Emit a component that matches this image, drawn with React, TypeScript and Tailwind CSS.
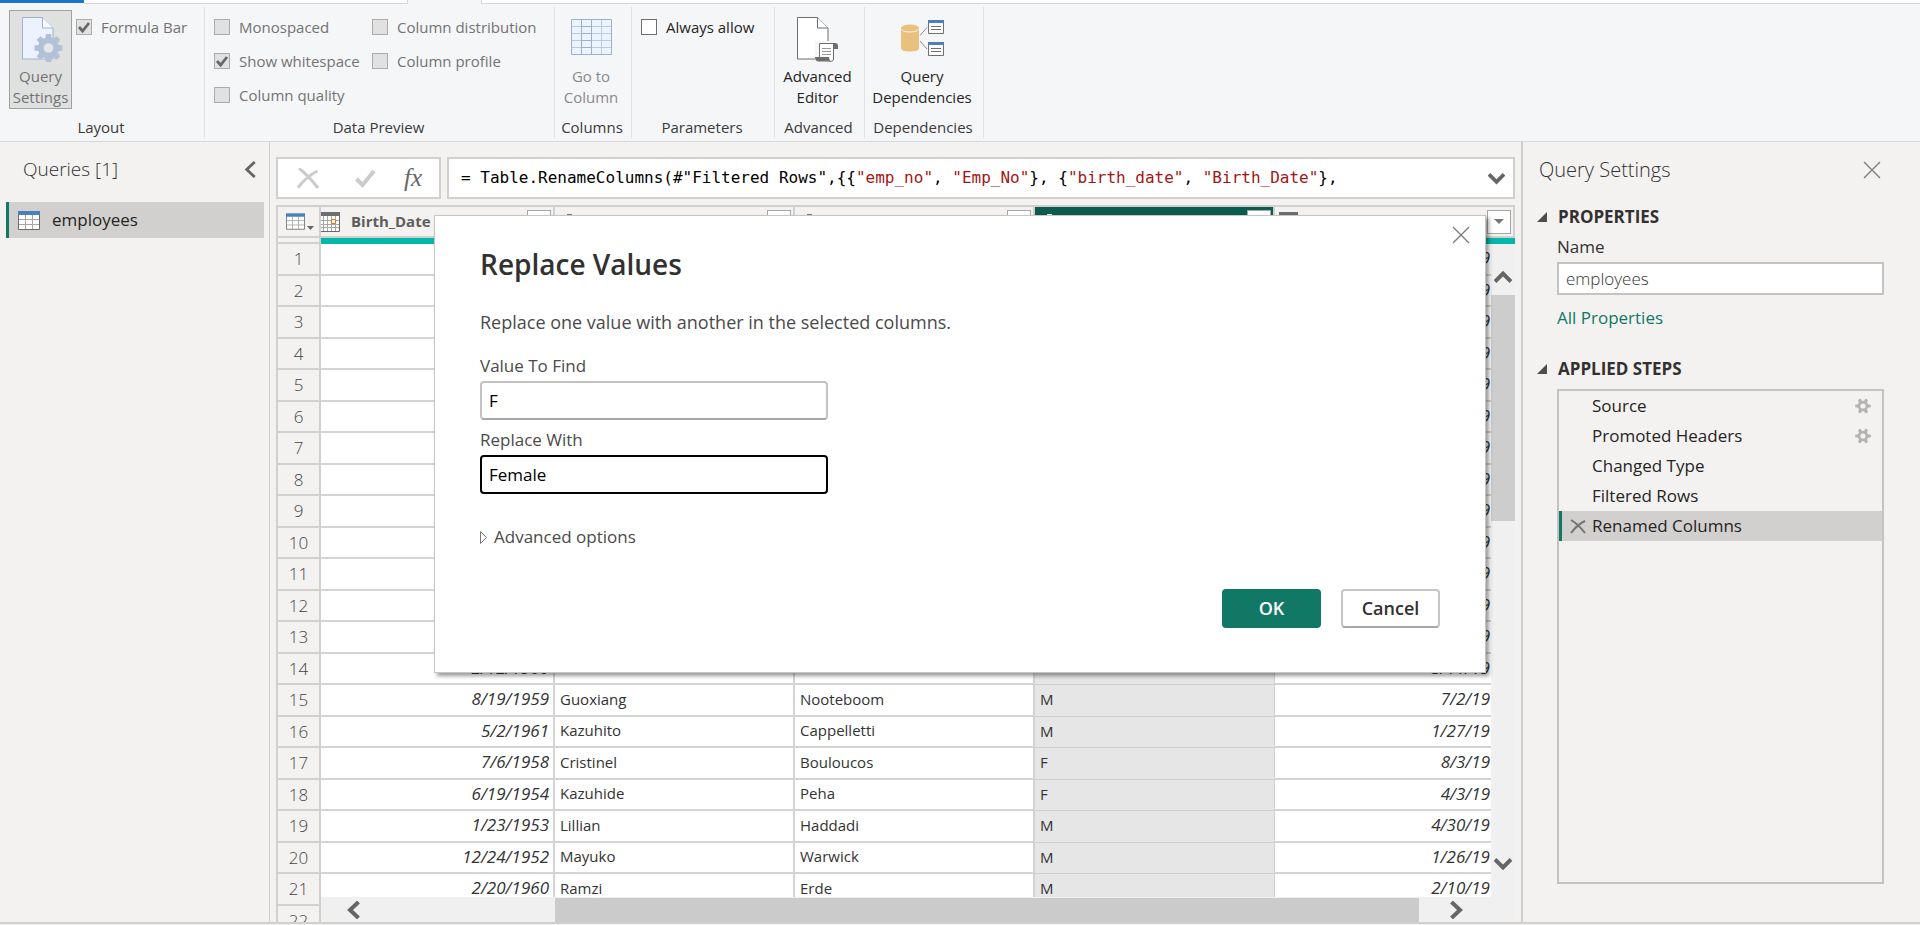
import type { ReactNode } from "react";

type CheckProps = { label: string; checked?: boolean; disabled?: boolean };

function Check({ label, checked = false, disabled = true }: CheckProps) {
  return (
    <label
      className={
        disabled
          ? "flex h-[34px] items-center gap-[9px] whitespace-nowrap text-[#737373]"
          : "flex h-[34px] items-center gap-[9px] whitespace-nowrap text-[#252423]"
      }
    >
      <span className="relative flex">
        <input
          type="checkbox"
          defaultChecked={checked}
          disabled={disabled}
          className={
            disabled
              ? "size-4 appearance-none border border-[#ababab] bg-[#e1e1e1]"
              : "size-4 appearance-none border border-[#6e6e6e] bg-white"
          }
        />
        {checked && (
          <svg viewBox="0 0 16 16" className="pointer-events-none absolute inset-0 size-4" aria-hidden="true">
            <path d="M3 8l3.6 4L13 4" fill="none" stroke="#686868" strokeWidth="2.8" />
          </svg>
        )}
      </span>
      {label}
    </label>
  );
}

function Group({ title, className, children }: { title: string; className: string; children: ReactNode }) {
  return (
    <section className={"flex h-[131px] shrink-0 flex-col justify-between border-r border-[#e1e2e3] pt-[3px] pb-px " + className}>
      <div className="flex">{children}</div>
      <h2 className="pr-0.5 text-center leading-5 text-[#3b3a39]">{title}</h2>
    </section>
  );
}

function BigButton({ lines, icon, className }: { lines: [string, string]; icon: ReactNode; className: string }) {
  return (
    <button type="button" className={"flex h-[99px] flex-col items-center border pt-1.5 " + className}>
      {icon}
      <span className="mt-1 block leading-[21px]">
        {lines[0]}
        <br />
        {lines[1]}
      </span>
    </button>
  );
}

const TEETH = [0, 45, 90, 135, 180, 225, 270, 315];

function SettingsIcon() {
  return (
    <svg width="41" height="45" viewBox="0 0 41 45" aria-hidden="true" className="ml-1">
      <path d="M.5.5h20L31 11v31H.5z" fill="#eaf3fe" stroke="#a3b1cf" />
      <path d="M20.5.5V11H31" fill="#f7fafe" stroke="#a3b1cf" />
      <g transform="translate(26.500 31)" fill="#b2c0d8">
        <circle r="10.500" />
        {TEETH.map((a) => (
          <path key={a} d="M-3.500-8l1-6h5l1 6z" transform={`rotate(${a})`} />
        ))}
        <circle r="4.800" fill="#e4e7e8" />
      </g>
    </svg>
  );
}

function ColumnsIcon() {
  return (
    <svg width="41" height="45" viewBox="0 0 41 45" aria-hidden="true">
      <path d="M.5 2.500h40v35H.5z" fill="#eaf3fe" />
      <path d="M.5 9.500h40M.5 16.500h40M.5 23.500h40M.5 30.500h40M30.500 2.500v35" stroke="#bcc8de" />
      <path d="M.5 2.500h40v35H.5zM10.500 2.500h10v35h-10zM10.500 9.500h10M10.500 16.500h10M10.500 23.500h10M10.500 30.500h10" fill="none" stroke="#a0aecb" />
    </svg>
  );
}

function EditorIcon() {
  return (
    <svg width="41" height="45" viewBox="0 0 41 45" aria-hidden="true">
      <path d="M.5.5h20L31 11v31H.5z" fill="#fff" stroke="#6e6e6e" />
      <path d="M20.500.5V11H31" fill="#fff" stroke="#6e6e6e" />
      <path d="M18 24h23v21H18z" fill="#f5f6f8" />
      <path d="M23 27h13v17H23z" fill="#fff" />
      <path d="M22.500 41V26.500H37M36.500 27v16q-1 1.500-4 1.500" fill="none" stroke="#6e6e6e" />
      <path d="M35 26h3q3 0 3 3v3h-4v-3zM18 40h14l1 4.500H21q-3-.5-3-4.500z" fill="#6e6e6e" />
      <path d="M25 31.500h9M25 34.500h9M25 37.500h9" stroke="#9a9a9a" />
    </svg>
  );
}

function DependenciesIcon() {
  return (
    <svg width="43" height="45" viewBox="0 0 43 45" aria-hidden="true">
      <path d="M0 10v21q0 3.500 9 3.500t9-3.500V10z" fill="#e8c17f" />
      <ellipse cx="9" cy="12" rx="9" ry="3.500" fill="#f5f0e5" />
      <ellipse cx="9" cy="11" rx="9" ry="3.500" fill="#e8c17f" />
      <path d="M19 18.500l7-8M19 24l7 8" stroke="#8a8a8a" />
      {[3, 25].map((y) => (
        <g key={y} transform={`translate(27 ${y})`}>
          <path d="M.5.5h15v13H.5z" fill="#fff" stroke="#6e6e6e" />
          <path d="M0 0h16v3H0z" fill="#4a80bd" />
          <path d="M3 6.500h10M3 9.500h10" stroke="#6e6e6e" />
        </g>
      ))}
    </svg>
  );
}

function TableIcon({ className }: { className: string }) {
  return (
    <svg viewBox="0 0 22 19" className={className} aria-hidden="true">
      <path d="M.5.5h21v18H.5z" fill="#fff" />
      <path d="M1 8.500h20M1 13.500h20M7.500 4v14M14.500 4v14" stroke="#a6a6a6" />
      <path d="M.5 1v17.500h21V1" fill="none" stroke="#6a6a6a" />
      <path d="M0 0h22v4H0z" fill="#4a80bd" />
    </svg>
  );
}

function CalendarIcon() {
  return (
    <svg width="19" height="20" viewBox="0 0 19 20" aria-hidden="true" className="shrink-0">
      <path d="M0 .5h18.500v19H0z" fill="#fff" />
      <path d="M0 8.500h18M0 12.500h18M0 15.500h18M2.500 4v15M6.500 4v15M10.500 4v15M14.500 4v15" stroke="#a6a6a6" />
      <path d="M18.500 1v18.500H0" fill="none" stroke="#6a6a6a" />
      <path d="M0 0h19v4H0z" fill="#6e6e6e" />
      <path d="M10.500 7.500h4v4h-4z" fill="#fff" stroke="#e07a1f" />
    </svg>
  );
}

function Chevron({ d, className, w = 3 }: { d: string; className: string; w?: number }) {
  return (
    <svg viewBox="0 0 18 18" className={className} aria-hidden="true">
      <path d={d} fill="none" stroke="#666" strokeWidth={w} />
    </svg>
  );
}

const UP = "M1 13.500L9 5.500L17 13.500";
const DOWN = "M1 4.500L9 12.500L17 4.500";
const LEFT = "M13.500 1L5 9L13.500 17";
const RIGHT = "M4.500 1L13 9L4.500 17";

function CloseIcon() {
  return (
    <svg width="18" height="18" viewBox="0 0 18 18" aria-hidden="true">
      <path d="M1 1l16 16M17 1L1 17" stroke="#7a7a7a" strokeWidth="1.300" />
    </svg>
  );
}

function Gear() {
  return (
    <svg width="16" height="16" viewBox="-8 -8 16 16" aria-hidden="true">
      <g fill="#b3b3b3">
        {[0, 60, 120, 180, 240, 300].map((a) => (
          <path key={a} d="M-1.800-4.500h3.600l-.5-3.300h-2.600z" transform={`rotate(${a + 30})`} />
        ))}
        <circle r="5.300" />
      </g>
      <circle r="2.600" fill="#f3f2f1" />
    </svg>
  );
}

function FilterButton({ label }: { label: string }) {
  return (
    <button
      type="button"
      aria-label={label}
      className="ml-auto flex size-6 shrink-0 items-center justify-center border border-[#a6a6a6] bg-white"
    >
      <svg width="10" height="5" viewBox="0 0 10 5" aria-hidden="true">
        <path d="M0 0h10L5 5z" fill="#777" />
      </svg>
    </button>
  );
}

type Row = [string, string, string, string, string];

const EMPTY: Row = ["", "", "", "", "9"];

const ROWS: Row[] = [
  ...Array.from({ length: 13 }, () => EMPTY),
  ["2/12/1960", "", "", "", "3/11/19"],
  ["8/19/1959", "Guoxiang", "Nooteboom", "M", "7/2/19"],
  ["5/2/1961", "Kazuhito", "Cappelletti", "M", "1/27/19"],
  ["7/6/1958", "Cristinel", "Bouloucos", "F", "8/3/19"],
  ["6/19/1954", "Kazuhide", "Peha", "F", "4/3/19"],
  ["1/23/1953", "Lillian", "Haddadi", "M", "4/30/19"],
  ["12/24/1952", "Mayuko", "Warwick", "M", "1/26/19"],
  ["2/20/1960", "Ramzi", "Erde", "M", "2/10/19"],
  ["", "", "", "", ""],
];

const STEPS = [
  { name: "Source", gear: true },
  { name: "Promoted Headers", gear: true },
  { name: "Changed Type", gear: false },
  { name: "Filtered Rows", gear: false },
];

function Ribbon() {
  return (
    <header className="shrink-0 border-b border-[#d6d8da] bg-[#f5f6f8] text-[15px]">
      <div className="flex h-1">
        <div className="h-[3px] w-[84px] bg-[#1a76cc]" />
        <div className="w-[324px] border-r border-b border-[#d8d8d8] bg-white" />
        <div className="w-[73px]" />
        <div className="flex-1 border-b border-l border-[#d8d8d8] bg-white" />
      </div>
      <div className="flex pt-[3px] pb-[3px]">
        <Group title="Layout" className="w-[205px]">
          <div className="flex gap-1 pl-[9px]">
            <BigButton lines={["Query", "Settings"]} icon={<SettingsIcon />} className="w-[63px] border-[#a0a0a0] bg-[#dfe1e0] text-[#737373]" />
            <Check label="Formula Bar" checked />
          </div>
        </Group>
        <Group title="Data Preview" className="w-[350px]">
          <div className="w-[167px] pl-[9px]">
            <Check label="Monospaced" />
            <Check label="Show whitespace" checked />
            <Check label="Column quality" />
          </div>
          <div>
            <Check label="Column distribution" />
            <Check label="Column profile" />
          </div>
        </Group>
        <Group title="Columns" className="w-[77px]">
          <BigButton lines={["Go to", "Column"]} icon={<ColumnsIcon />} className="w-full border-transparent pr-1 text-[#8a8a8a]" />
        </Group>
        <Group title="Parameters" className="w-[143px]">
          <div className="pl-[9px]">
            <Check label="Always allow" disabled={false} />
          </div>
        </Group>
        <Group title="Advanced" className="w-[90px]">
          <BigButton lines={["Advanced", "Editor"]} icon={<EditorIcon />} className="w-full border-transparent pr-1 text-[#252423]" />
        </Group>
        <Group title="Dependencies" className="w-[119px]">
          <BigButton lines={["Query", "Dependencies"]} icon={<DependenciesIcon />} className="w-full border-transparent pr-1 text-[#252423]" />
        </Group>
      </div>
    </header>
  );
}

function QueriesPane() {
  return (
    <nav aria-label="Queries" className="w-[270px] shrink-0 border-r border-[#cfcdcb] pt-[11px]">
      <div className="flex h-8 items-center justify-between pr-2.5 pl-[23px]">
        <h2 className="text-[19px] font-light text-[#333]">Queries [1]</h2>
        <button type="button" aria-label="Collapse queries">
          <Chevron d={LEFT} className="size-[17px]" />
        </button>
      </div>
      <button
        type="button"
        className="mt-[17px] ml-1.5 flex h-9 w-[258px] items-center gap-3 border-l-[3px] border-[#117865] bg-[#d2d0ce] pl-[9px] text-[17px] text-[#252423]"
      >
        <TableIcon className="h-[19px] w-[22px]" />
        employees
      </button>
    </nav>
  );
}

function FormulaBar() {
  return (
    <div className="flex h-[42px] shrink-0 gap-1.5">
      <div className="flex w-[165px] items-center justify-between border-2 border-[#d0cfcd] bg-white pr-[17px] pl-[19px]">
        <button type="button" aria-label="Cancel formula">
          <svg width="22" height="21" viewBox="0 0 22 21" aria-hidden="true">
            <path d="M2 .5Q10 6 21 20M20.500 3Q10 8 1 19.500" fill="none" stroke="#cbcbcb" strokeWidth="3" />
          </svg>
        </button>
        <button type="button" aria-label="Accept formula" className="pl-2">
          <svg width="21" height="19" viewBox="0 0 21 19" aria-hidden="true">
            <path d="M1.500 10l6 6L19 2" fill="none" stroke="#cbcbcb" strokeWidth="4" />
          </svg>
        </button>
        <button type="button" aria-label="Insert step" className="font-['Liberation_Serif',serif] text-[25px] leading-7 text-[#666] italic">
          fx
        </button>
      </div>
      <div className="flex min-w-0 flex-1 items-center border-2 border-[#d0cfcd] bg-white pr-2 pl-3">
        <code className="flex-1 overflow-hidden font-['DejaVu_Sans_Mono',monospace] text-[16px] whitespace-pre text-black">
          {'= Table.RenameColumns(#"Filtered Rows",{{'}
          <span className="text-[#a31515]">"emp_no"</span>
          {", "}
          <span className="text-[#a31515]">"Emp_No"</span>
          {"}, {"}
          <span className="text-[#a31515]">"birth_date"</span>
          {", "}
          <span className="text-[#a31515]">"Birth_Date"</span>
          {"},"}
        </code>
        <button type="button" aria-label="Expand formula bar">
          <Chevron d={DOWN} className="size-[17px]" w={4} />
        </button>
      </div>
    </div>
  );
}

const HEAD = "h-[31px] border-r-2 border-b-2 border-[#d2d0ce] p-0";
const CELL = "border-r-2 border-b-2 border-[#d4d4d4] bg-white p-0 pb-0.5 whitespace-nowrap";

function DataGrid() {
  return (
    <div className="relative mt-1.5 min-h-0 flex-1 overflow-hidden border-t-2 border-l-2 border-[#d2d0ce]">
      <table className="w-full table-fixed border-separate border-spacing-0 text-[15px] text-[#333]">
        <colgroup>
          <col className="w-[43px]" />
          <col className="w-[234px]" />
          <col className="w-[240px]" />
          <col className="w-[240px]" />
          <col className="w-[240px]" />
          <col />
        </colgroup>
        <thead>
          <tr>
            <th className={HEAD}>
              <button type="button" aria-label="Table menu" className="flex items-end gap-0.5 pl-2">
                <TableIcon className="h-[17px] w-[19px]" />
                <svg width="7" height="4" viewBox="0 0 7 4" aria-hidden="true">
                  <path d="M0 0h7L3.500 4z" fill="#666" />
                </svg>
              </button>
            </th>
            <th className={HEAD}>
              <div className="flex h-[29px] items-center pr-0.5">
                <CalendarIcon />
                <span className="pl-[11px] text-[#5f5e5c]">Birth_Date</span>
                <FilterButton label="Filter Birth_Date" />
              </div>
            </th>
            <th className={HEAD}>
              <div className="flex h-[29px] items-center pr-0.5 pl-3">
                <span className="h-[15px] w-[5px] bg-[#777]" />
                <FilterButton label="Filter first column" />
              </div>
            </th>
            <th className={HEAD}>
              <div className="flex h-[29px] items-center pr-0.5 pl-3">
                <span className="h-[15px] w-[5px] bg-[#777]" />
                <FilterButton label="Filter second column" />
              </div>
            </th>
            <th className={HEAD + " bg-[#0b5c4e]"}>
              <div className="flex h-[29px] items-center pr-0.5 pl-3">
                <span className="h-[15px] w-[5px] bg-[#e6efed]" />
                <FilterButton label="Filter third column" />
              </div>
            </th>
            <th className={HEAD}>
              <div className="flex h-[29px] items-center pr-0.5 pl-1">
                <CalendarIcon />
                <FilterButton label="Filter fourth column" />
              </div>
            </th>
          </tr>
          <tr>
            <td className="h-1.5 border-r-2 border-b-2 border-[#d2d0ce] p-0" />
            <td colSpan={5} className="h-1.5 bg-[#01b8aa] p-0" />
          </tr>
        </thead>
        <tbody>
          {ROWS.map((row, i) => (
            <tr key={i} className="odd:h-8 even:h-[31px]">
              <th scope="row" className="border-r-2 border-b-2 border-[#d2d0ce] p-0 text-[17px] leading-6 font-light text-[#444]">
                {i + 1}
              </th>
              <td className={CELL + " pr-1 text-right text-[17px] leading-6 italic"}>{row[0]}</td>
              <td className={CELL + " pl-[5px]"}>{row[1]}</td>
              <td className={CELL + " pl-[5px]"}>{row[2]}</td>
              <td className="border-r border-b border-[#cfcfcf] bg-[#e6e6e6] p-0 pb-0.5 pl-[5px]">{row[3]}</td>
              <td className={CELL + " border-r-0 pr-[23px] text-right text-[17px] leading-6 italic"}>{row[4]}</td>
            </tr>
          ))}
        </tbody>
      </table>
      <div className="absolute top-[37px] right-0 bottom-6 flex w-6 flex-col items-center bg-[#f0f0f0]">
        <Chevron d={UP} className="mt-6 size-[18px]" w={4} />
        <div className="mt-[9px] h-[226px] w-full bg-[#cdcdcd]" />
        <Chevron d={DOWN} className="mt-auto mb-[25px] size-[18px]" w={4} />
      </div>
      <div className="absolute right-0 bottom-0 left-[43px] flex h-[25px] items-center bg-[#f0f0f0] pr-[50px] pl-6">
        <Chevron d={LEFT} className="size-[18px]" w={4} />
        <div className="mr-7 ml-[192px] h-6 flex-1 bg-[#cbcbcb]" />
        <Chevron d={RIGHT} className="size-[18px]" w={4} />
      </div>
    </div>
  );
}

function SectionTitle({ children }: { children: ReactNode }) {
  return (
    <h3 className="flex h-6 items-center gap-2.5 text-[17px] font-bold text-[#323130]">
      <svg width="11" height="10" viewBox="0 0 11 10" aria-hidden="true">
        <path d="M0 10L10 0v10z" fill="#4d4d4d" />
      </svg>
      {children}
    </h3>
  );
}

function SettingsPane() {
  return (
    <aside className="flex w-[399px] shrink-0 flex-col border-l-2 border-[#cfcdcb] pt-3 pr-9 pb-[38px] pl-3.5 text-[17px] text-[#323130]">
      <div className="flex h-8 items-center justify-between pr-[3px] pl-0.5">
        <h2 className="text-[20px] font-light text-[#333]">Query Settings</h2>
        <button type="button" aria-label="Close query settings">
          <CloseIcon />
        </button>
      </div>
      <div className="mt-[19px]">
        <SectionTitle>PROPERTIES</SectionTitle>
      </div>
      <div className="mt-1.5 flex flex-col pl-5">
        <label htmlFor="query-name" className="leading-6">
          Name
        </label>
        <input
          id="query-name"
          defaultValue="employees"
          className="mt-[3px] h-[33px] w-full border-2 border-[#c4c3c1] bg-white px-[7px] font-light text-[#333] outline-none"
        />
        <a href="#properties" className="mt-[11px] leading-6 text-[#117865]">
          All Properties
        </a>
      </div>
      <div className="mt-[27px]">
        <SectionTitle>APPLIED STEPS</SectionTitle>
      </div>
      <ul className="mt-2 ml-5 flex-1 border-2 border-[#c4c3c1] text-[#252423]">
        {STEPS.map((s) => (
          <li key={s.name} className="flex h-[30px] items-center justify-between pr-[11px] pl-[33px]">
            {s.name}
            {s.gear && (
              <button type="button" aria-label={"Edit " + s.name}>
                <Gear />
              </button>
            )}
          </li>
        ))}
        <li className="flex h-[30px] items-center gap-1.5 border-l-[3px] border-[#117865] bg-[#d2d0ce] pl-2">
          <button type="button" aria-label="Delete step">
            <svg width="16" height="15" viewBox="0 0 16 15" aria-hidden="true">
              <path d="M1 1q7 4 14 13M15 2Q8 5 1 14" fill="none" stroke="#737373" strokeWidth="2" />
            </svg>
          </button>
          Renamed Columns
        </li>
      </ul>
    </aside>
  );
}

const FIELD = "mt-[3px] h-[39px] w-[348px] rounded border-2 bg-white px-[7px] text-black outline-none";

function ReplaceDialog() {
  return (
    <div className="absolute inset-x-0 top-[215px] flex justify-center">
      <form
        role="dialog"
        aria-labelledby="dialog-title"
        onSubmit={(e) => e.preventDefault()}
        className="relative flex w-[1052px] flex-col border border-[#c8c6c4] bg-white pt-7 pr-[45px] pb-11 pl-[45px] text-[17px] text-[#4a4a4a] shadow-[3px_3px_4px_rgba(0,0,0,0.4)]"
      >
        <button type="button" aria-label="Close" className="absolute top-2.5 right-[15px]">
          <CloseIcon />
        </button>
        <h1 id="dialog-title" className="text-[28px] leading-10 font-semibold text-[#323130]">
          Replace Values
        </h1>
        <p className="mt-6 text-[18px] leading-7">Replace one value with another in the selected columns.</p>
        <label htmlFor="find" className="mt-[18px] leading-6">
          Value To Find
        </label>
        <input id="find" defaultValue="F" className={FIELD + " border-[#c4c3c1] border-b-[#a8a6a4]"} />
        <label htmlFor="replace" className="mt-2 leading-6">
          Replace With
        </label>
        <input id="replace" defaultValue="Female" className={FIELD + " border-black"} />
        <button type="button" className="mt-[31px] flex items-center gap-[7px] self-start leading-6">
          <svg width="7" height="13" viewBox="0 0 7 13" aria-hidden="true">
            <path d="M.5.5l6 6-6 6z" fill="none" stroke="#777" />
          </svg>
          Advanced options
        </button>
        <div className="mt-10 flex justify-end gap-5 text-[18px] font-semibold">
          <button type="submit" className="h-[39px] w-[99px] rounded bg-[#117865] text-white">
            OK
          </button>
          <button type="button" className="h-[39px] w-[99px] rounded border-2 border-[#c8c6c4] border-b-[#a8a6a4] bg-white text-[#323130]">
            Cancel
          </button>
        </div>
      </form>
    </div>
  );
}

export default function App() {
  return (
    <div className="relative flex h-screen flex-col overflow-hidden bg-[#f3f2f1] font-['Open_Sans',sans-serif]">
      <Ribbon />
      <main className="flex min-h-0 flex-1">
        <QueriesPane />
        <div className="flex min-w-0 flex-1 flex-col px-1.5 pt-[15px]">
          <FormulaBar />
          <DataGrid />
        </div>
        <SettingsPane />
      </main>
      <div className="mb-px h-0.5 shrink-0 bg-[#d2d0ce]" />
      <ReplaceDialog />
    </div>
  );
}
